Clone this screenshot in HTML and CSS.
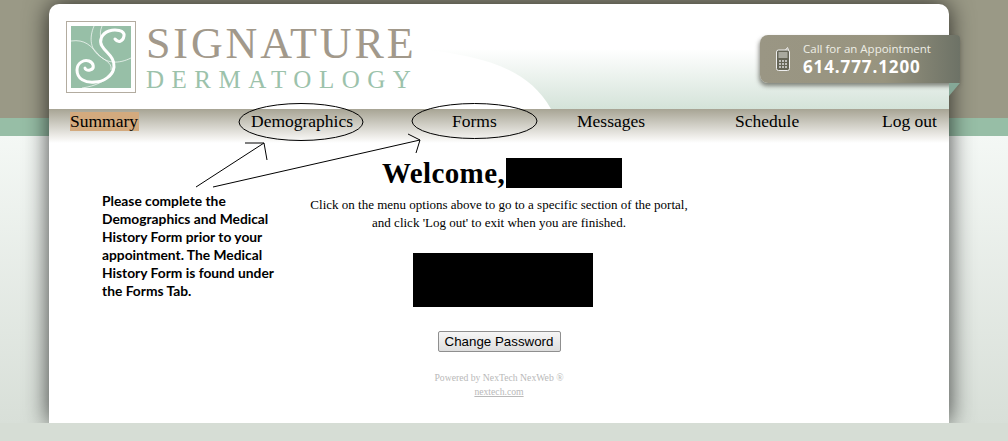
FILE: index.html
```html
<!DOCTYPE html>
<html lang="en">
<head>
	<meta charset="UTF-8" />
	<title>Signature Dermatology - Patient Portal</title>
	<link rel="stylesheet" href="styles.css">
</head>
<body>
	<div class="page">
		<div class="card">
			<header class="header">
				<svg class="swoosh" width="900" height="105" viewBox="0 0 900 105">
					<defs>
						<linearGradient id="swooshFill" x1="0" y1="0" x2="0" y2="1">
							<stop offset="0" stop-color="#ffffff" />
							<stop offset="1" stop-color="#d4e3d9" />
						</linearGradient>
					</defs>
					<path d="M372 45 C430 52 478 62 502 105 L900 105 L900 45 Z" fill="url(#swooshFill)" />
				</svg>
				<div class="logo">
					<div class="logo-mark">
						<svg width="60" height="62" viewBox="0 0 60 62">
							<rect width="60" height="62" fill="#97bfa7" />
							<g fill="none" stroke="#fff">
								<path d="M23 0 C18 12 19 24 30 31 C37 36 41 38 40 44" stroke-width="0.8" opacity="0.85" />
								<path d="M31 0 C29 5 29 9 30 13" stroke-width="0.8" opacity="0.85" />
								<path d="M0 15 C14 13 20 20 27 28 C35 38 48 38 60 32" stroke-width="0.8" opacity="0.85" />
								<path d="M11 62 C25 60 35 55 43 46" stroke-width="0.8" opacity="0.85" />
								<path d="M44 13 C47 17 52 16 53 10 C54 4 44 3 38 5 C30 8 28 15 31 20 C35 27 44 31 43 41 C42 50 32 56 24 56 C14 57 6 53 6 44 C6 37 13 33 18 35 C23 37 24 43 19 44 C16 45 14 43 14 42" stroke-width="3" stroke-linecap="round" />
							</g>
						</svg>
					</div>
					<div class="logo-text">
						<div class="logo-name">SIGNATURE</div>
						<div class="logo-sub">DERMATOLOGY</div>
					</div>
				</div>
				<div class="call-box">
					<svg class="phone" width="14" height="24" viewBox="0 0 14 24">
						<path d="M9.5 3 L11.5 0.5 L12.5 3" fill="none" stroke="#eee" stroke-width="1" />
						<rect x="0.5" y="3" width="13" height="20.5" rx="2" fill="#666658" stroke="#eee" />
						<rect x="2.5" y="5" width="9" height="6" fill="#a9a99f" />
						<path d="M3 14 H11 M3 17 H11 M3 20 H11" stroke="#ddd" stroke-width="1.6" stroke-dasharray="2 1" />
					</svg>
					<div>
						<div class="call-label">Call for an Appointment</div>
						<div class="call-number">614.777.1200</div>
					</div>
				</div>
				<div class="fold"></div>
			</header>

			<nav class="menu">
				<a class="active">Summary</a>
				<a>Demographics</a>
				<a>Forms</a>
				<a>Messages</a>
				<a>Schedule</a>
				<a>Log out</a>
			</nav>

			<main class="content">
				<h1><span>Welcome,</span><span class="redacted name-block"></span></h1>
				<p class="intro">Click on the menu options above to go to a specific section of the portal,<br>and click 'Log out' to exit when you are finished.</p>
				<div class="redacted info-block"></div>
				<button class="btn">Change Password</button>
				<div class="powered">
					Powered by NexTech NexWeb ®<br>
					<a>nextech.com</a>
				</div>
			</main>
		</div>

		<p class="note">Please complete the Demographics and Medical History Form prior to your appointment. The Medical History Form is found under the Forms Tab.</p>

		<!-- marcas dibujadas encima de la captura -->
		<svg class="marks" width="1008" height="441" viewBox="0 0 1008 441">
			<g fill="none" stroke="#000" stroke-width="1">
				<ellipse cx="301" cy="122" rx="62" ry="18.5" />
				<ellipse cx="474.5" cy="121" rx="62.5" ry="17.5" />
				<path d="M196 187 L264 143 M245 143 H264 L267 160" />
				<path d="M213 187 L420 140 M408 134 L420 140 L416 153" />
			</g>
		</svg>

		<footer class="bottom"></footer>
	</div>
</body>
</html>
```

FILE: styles.css
```css
html, body {
	margin: 0;
	padding: 0;
}

.page {
	position: relative;
	width: 1008px;
	height: 441px;
	overflow: hidden;
	padding-top: 4px;
	box-sizing: border-box;
	background: linear-gradient(#9a9986 0, #9a9986 118px, #97bea6 118px, #97bea6 136px, #f4f8f5 136px, #d8dfd8 423px);
	font-family: "Liberation Serif", serif;
	color: #000;
}

.card {
	position: relative;
	width: 900px;
	height: 419px;
	margin-left: 49px;
	background: #fff;
	border-radius: 10px 10px 0 0;
	box-shadow: 0 0 24px rgba(0, 0, 0, 0.75);
}

/* cabecera */
.header {
	position: relative;
	height: 105px;
	padding: 17px 0 0 17px;
	box-sizing: border-box;
}

.swoosh {
	position: absolute;
	left: 0;
	top: 0;
}

.logo {
	position: relative;
	display: flex;
	gap: 10px;
}

.logo-mark {
	width: 60px;
	height: 62px;
	padding: 4px;
	border: 1px solid #b3aca0;
	background: #fff;
}

.logo-mark svg {
	display: block;
}

.logo-text {
	padding-top: 3px;
}

.logo-name {
	font-size: 44px;
	line-height: 40px;
	letter-spacing: 2.9px;
	color: #a2998b;
}

.logo-sub {
	margin-top: 4px;
	font-size: 25px;
	line-height: 24px;
	letter-spacing: 7.5px;
	color: #9cc2ab;
}

.call-box {
	position: absolute;
	left: 711px;
	top: 31px;
	width: 200px;
	height: 48px;
	display: flex;
	align-items: center;
	gap: 13px;
	padding-left: 16px;
	box-sizing: border-box;
	background: linear-gradient(90deg, #9a9684 0, #98947f 62%, #6d7266 100%);
	border-radius: 8px 4px 4px 8px;
	box-shadow: -1px 3px 4px rgba(60, 60, 50, 0.6);
	color: #fff;
	font-family: "Open Sans", sans-serif;
}

.phone {
	flex: none;
}

.call-label {
	font-size: 11.5px;
	line-height: 14px;
	color: #eeeee6;
}

.call-number {
	font-size: 17px;
	line-height: 21px;
	font-weight: 700;
	letter-spacing: 0.9px;
}

.fold {
	position: absolute;
	left: 900px;
	top: 79px;
	width: 0;
	height: 0;
	border-top: 13px solid #85a897;
	border-right: 11px solid transparent;
}

/* menu */
.menu {
	display: grid;
	grid-template-columns: 181px 201px 125px 158px 147px auto;
	justify-content: start;
	align-items: start;
	height: 34px;
	padding: 3px 0 0 21px;
	box-sizing: border-box;
	background: linear-gradient(#a7a494, #f2f1ee 85%, #fff);
	font-size: 17.5px;
	line-height: 19px;
}

.menu a {
	justify-self: start;
}

.menu .active {
	padding-right: 1px;
	background: #d3aa7e;
}

/* contenido */
.content {
	display: flex;
	flex-direction: column;
	align-items: center;
	padding-top: 15px;
}

h1 {
	display: flex;
	margin: 0 0 0 6px;
	font-size: 29px;
	line-height: 30px;
	font-weight: 700;
	letter-spacing: 0.4px;
}

.redacted {
	background: #000;
}

.name-block {
	width: 116px;
	height: 30px;
	margin-left: 1px;
}

.intro {
	margin: 8px 0 0;
	font-size: 13px;
	line-height: 18px;
	text-align: center;
}

.info-block {
	width: 180px;
	height: 54px;
	margin: 21px 0 0 8px;
}

.btn {
	width: 123px;
	height: 21px;
	margin-top: 24px;
	padding: 0;
	border: 1px solid #8f8f8f;
	border-radius: 2px;
	background: linear-gradient(#f6f6f6, #dedede);
	font-family: "Liberation Sans", sans-serif;
	font-size: 13.33px;
	color: #000;
}

.powered {
	margin-top: 19px;
	font-size: 9.7px;
	line-height: 14px;
	text-align: center;
	color: #b9b9b9;
}

.powered a {
	text-decoration: underline;
}

/* anotaciones */
.note {
	position: absolute;
	left: 102px;
	top: 192px;
	width: 180px;
	margin: 0;
	font-family: Lato, sans-serif;
	font-size: 13.8px;
	line-height: 18px;
	font-weight: 700;
}

.marks {
	position: absolute;
	left: 0;
	top: 0;
	pointer-events: none;
}

.bottom {
	position: absolute;
	left: 0;
	top: 423px;
	width: 100%;
	height: 18px;
	background: #d6ddd5;
}
```
